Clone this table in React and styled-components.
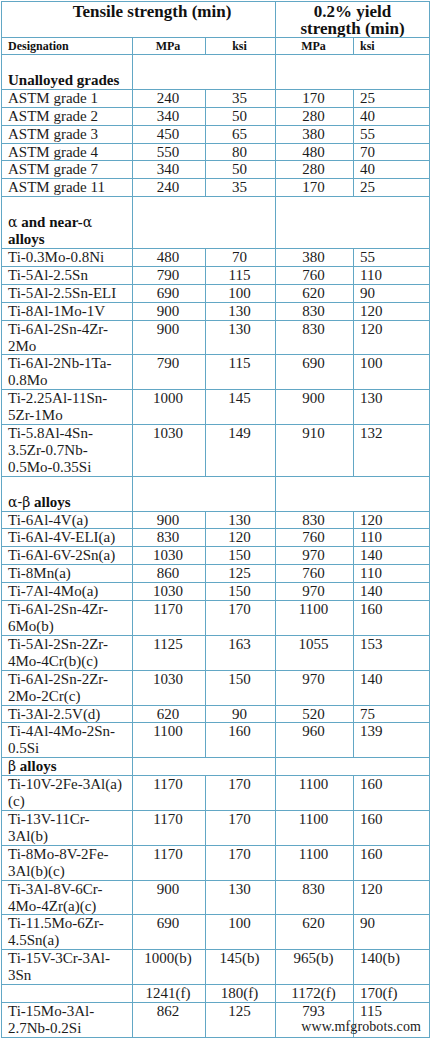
import React from 'react';
import styled, { createGlobalStyle } from 'styled-components';

const GlobalStyle = createGlobalStyle`
  html, body {
    margin: 0;
    padding: 0;
    background: #ffffff;
  }
  body {
    font-family: 'Liberation Serif', 'Times New Roman', serif;
    color: #1b1b1b;
  }
`;

const Page = styled.div`
  position: relative;
  width: 431px;
  padding: 1px 0 0 1px;
  box-sizing: border-box;
`;

const Table = styled.table`
  width: 428px;
  table-layout: fixed;
  border-collapse: collapse;
  font-family: 'Liberation Serif', 'Times New Roman', serif;

  & td {
    border: 1px solid #62a7c5;
    vertical-align: top;
    white-space: nowrap;
    overflow: hidden;
  }
`;

const HeadCell = styled.td`
  padding: 1px 4px 0 ${(p) => (p.$indent ? '31px' : '4px')};
  font-size: 17px;
  line-height: 17px;
  font-weight: bold;
  color: #111;
  text-align: center;
`;

const UnitCell = styled.td`
  padding: 0 8px 0 6px;
  font-size: 12px;
  line-height: 16px;
  font-weight: bold;
  color: #111;
  text-align: ${(p) => p.$align || 'left'};
`;

const SectionCell = styled.td`
  padding: 0 6px;
  font-size: 15px;
  line-height: 16.9px;
  color: #111;

  & b {
    font-weight: bold;
  }
`;

const Greek = styled.span`
  font-weight: normal;
  font-family: 'DejaVu Serif', 'Liberation Serif', serif;
  font-size: 14px;
`;

const Cell = styled.td`
  padding: 0 8px 0 6px;
  font-size: 15px;
  line-height: 16.9px;
  color: #1b1b1b;
  text-align: ${(p) => p.$align || 'left'};
`;

const Watermark = styled.div`
  position: absolute;
  right: 10px;
  bottom: 4px;
  font-family: 'Liberation Serif', 'Times New Roman', serif;
  font-size: 14px;
  line-height: 14px;
  color: #1a1a1a;
  letter-spacing: 0.1px;
`;

// each group: title, whether a blank line sits above it, then its rows
const groups = [
  {
    blank: true,
    title: [<b key="a">Unalloyed grades</b>],
    rows: [
      [['ASTM grade 1'], '240', '35', '170', '25'],
      [['ASTM grade 2'], '340', '50', '280', '40'],
      [['ASTM grade 3'], '450', '65', '380', '55'],
      [['ASTM grade 4'], '550', '80', '480', '70'],
      [['ASTM grade 7'], '340', '50', '280', '40'],
      [['ASTM grade 11'], '240', '35', '170', '25'],
    ],
  },
  {
    blank: true,
    title: [
      <Greek key="a">α</Greek>,
      <b key="b"> and near-</b>,
      <Greek key="c">α</Greek>,
      <br key="d" />,
      <b key="e">alloys</b>,
    ],
    rows: [
      [['Ti-0.3Mo-0.8Ni'], '480', '70', '380', '55'],
      [['Ti-5Al-2.5Sn'], '790', '115', '760', '110'],
      [['Ti-5Al-2.5Sn-ELI'], '690', '100', '620', '90'],
      [['Ti-8Al-1Mo-1V'], '900', '130', '830', '120'],
      [['Ti-6Al-2Sn-4Zr-', '2Mo'], '900', '130', '830', '120'],
      [['Ti-6Al-2Nb-1Ta-', '0.8Mo'], '790', '115', '690', '100'],
      [['Ti-2.25Al-11Sn-', '5Zr-1Mo'], '1000', '145', '900', '130'],
      [['Ti-5.8Al-4Sn-', '3.5Zr-0.7Nb-', '0.5Mo-0.35Si'], '1030', '149', '910', '132'],
    ],
  },
  {
    blank: true,
    title: [<Greek key="a">α-β</Greek>, <b key="b"> alloys</b>],
    rows: [
      [['Ti-6Al-4V(a)'], '900', '130', '830', '120'],
      [['Ti-6Al-4V-ELI(a)'], '830', '120', '760', '110'],
      [['Ti-6Al-6V-2Sn(a)'], '1030', '150', '970', '140'],
      [['Ti-8Mn(a)'], '860', '125', '760', '110'],
      [['Ti-7Al-4Mo(a)'], '1030', '150', '970', '140'],
      [['Ti-6Al-2Sn-4Zr-', '6Mo(b)'], '1170', '170', '1100', '160'],
      [['Ti-5Al-2Sn-2Zr-', '4Mo-4Cr(b)(c)'], '1125', '163', '1055', '153'],
      [['Ti-6Al-2Sn-2Zr-', '2Mo-2Cr(c)'], '1030', '150', '970', '140'],
      [['Ti-3Al-2.5V(d)'], '620', '90', '520', '75'],
      [['Ti-4Al-4Mo-2Sn-', '0.5Si'], '1100', '160', '960', '139'],
    ],
  },
  {
    blank: false,
    title: [<Greek key="a">β</Greek>, <b key="b"> alloys</b>],
    rows: [
      [['Ti-10V-2Fe-3Al(a)', '(c)'], '1170', '170', '1100', '160'],
      [['Ti-13V-11Cr-', '3Al(b)'], '1170', '170', '1100', '160'],
      [['Ti-8Mo-8V-2Fe-', '3Al(b)(c)'], '1170', '170', '1100', '160'],
      [['Ti-3Al-8V-6Cr-', '4Mo-4Zr(a)(c)'], '900', '130', '830', '120'],
      [['Ti-11.5Mo-6Zr-', '4.5Sn(a)'], '690', '100', '620', '90'],
      [['Ti-15V-3Cr-3Al-', '3Sn'], '1000(b)', '145(b)', '965(b)', '140(b)'],
      [[''], '1241(f)', '180(f)', '1172(f)', '170(f)'],
      [['Ti-15Mo-3Al-', '2.7Nb-0.2Si'], '862', '125', '793', '115'],
    ],
  },
];

function Lines({ lines }) {
  return lines.map((line, i) => (
    <React.Fragment key={i}>
      {i > 0 && <br />}
      {line}
    </React.Fragment>
  ));
}

export default function App() {
  return (
    <Page>
      <GlobalStyle />
      <Table>
        <colgroup>
          <col style={{ width: 131 }} />
          <col style={{ width: 73 }} />
          <col style={{ width: 70 }} />
          <col style={{ width: 78 }} />
          <col style={{ width: 76 }} />
        </colgroup>
        <tbody>
          <tr>
            <HeadCell colSpan={3} $indent>
              Tensile strength (min)
            </HeadCell>
            <HeadCell colSpan={2}>
              0.2% yield
              <br />
              strength (min)
            </HeadCell>
          </tr>
          <tr>
            <UnitCell>Designation</UnitCell>
            <UnitCell $align="center">MPa</UnitCell>
            <UnitCell $align="center">ksi</UnitCell>
            <UnitCell $align="center">MPa</UnitCell>
            <UnitCell>ksi</UnitCell>
          </tr>
          {groups.map((group, gi) => (
            <React.Fragment key={gi}>
              <tr>
                <SectionCell>
                  {group.blank && <br />}
                  {group.title}
                </SectionCell>
                <SectionCell colSpan={2} />
                <SectionCell colSpan={2} />
              </tr>
              {group.rows.map(([name, mpa, ksi, yMpa, yKsi], ri) => (
                <tr key={ri}>
                  <Cell>
                    <Lines lines={name} />
                  </Cell>
                  <Cell $align="center">{mpa}</Cell>
                  <Cell $align="center">{ksi}</Cell>
                  <Cell $align="center">{yMpa}</Cell>
                  <Cell>{yKsi}</Cell>
                </tr>
              ))}
            </React.Fragment>
          ))}
        </tbody>
      </Table>
      <Watermark>www.mfgrobots.com</Watermark>
    </Page>
  );
}
